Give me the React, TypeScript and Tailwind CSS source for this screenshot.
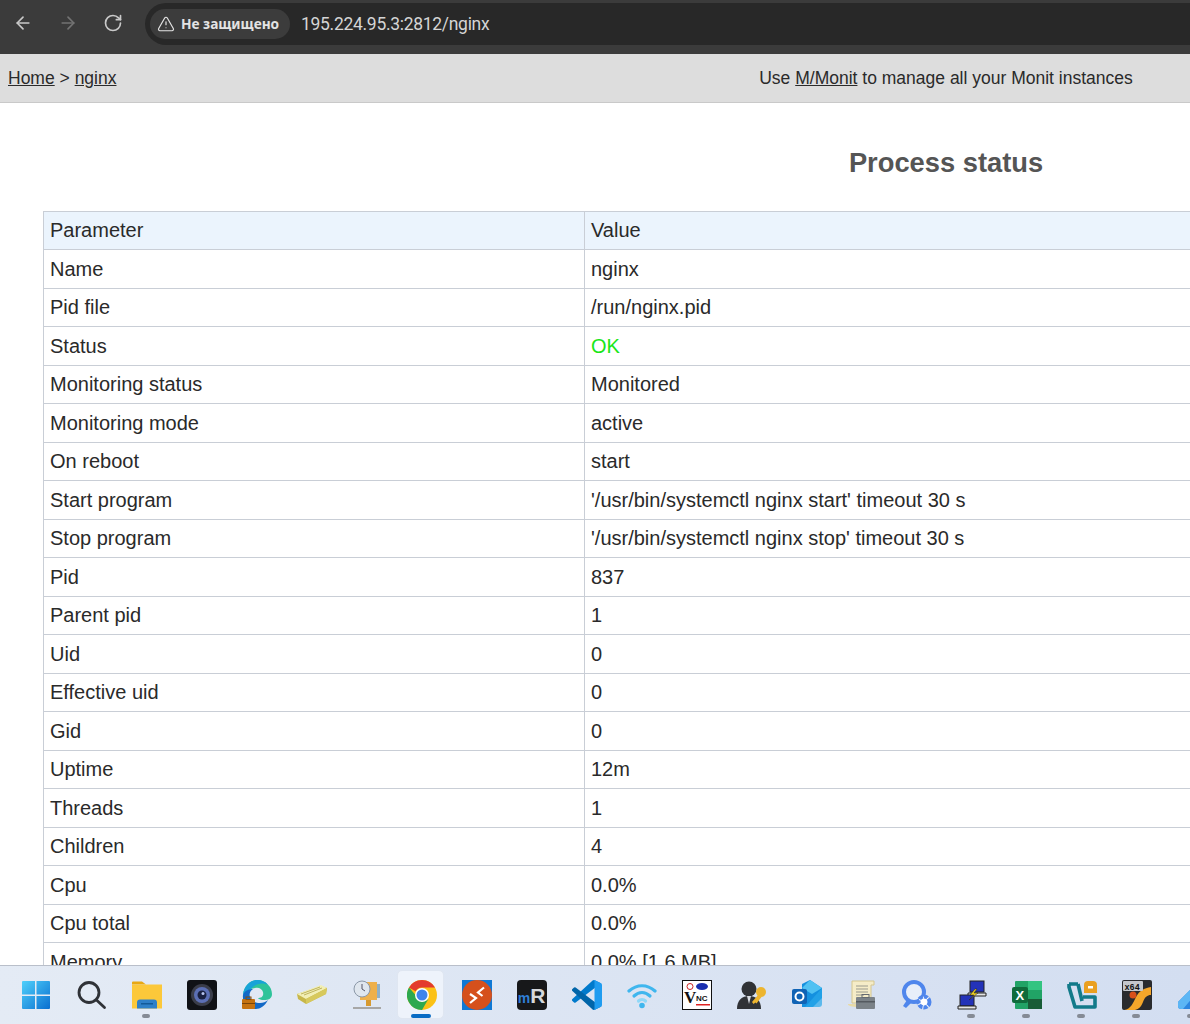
import React from "react";
import { ArrowLeft, ArrowRight, RotateCw, TriangleAlert } from "lucide-react";

const rows: [string, string][] = [
  ["Name", "nginx"],
  ["Pid file", "/run/nginx.pid"],
  ["Status", "OK"],
  ["Monitoring status", "Monitored"],
  ["Monitoring mode", "active"],
  ["On reboot", "start"],
  ["Start program", "'/usr/bin/systemctl nginx start' timeout 30 s"],
  ["Stop program", "'/usr/bin/systemctl nginx stop' timeout 30 s"],
  ["Pid", "837"],
  ["Parent pid", "1"],
  ["Uid", "0"],
  ["Effective uid", "0"],
  ["Gid", "0"],
  ["Uptime", "12m"],
  ["Threads", "1"],
  ["Children", "4"],
  ["Cpu", "0.0%"],
  ["Cpu total", "0.0%"],
  ["Memory", "0.0% [1.6 MB]"],
];

const Win = () => (
  <svg viewBox="1 0 30 30" className="w-[30px] h-[30px]">
    <defs>
      <linearGradient id="wg" x1="0" y1="0" x2="1" y2="1">
        <stop offset="0" stopColor="#4fd0fb" />
        <stop offset="1" stopColor="#0a6fd0" />
      </linearGradient>
    </defs>
    <path d="M1 2a1 1 0 0 1 1-1h12v13.500H1zM15.500 1H28a1 1 0 0 1 1 1v12.500H15.500zM1 16h13v13H2a1 1 0 0 1-1-1zM15.500 16H29v12a1 1 0 0 1-1 1H15.500z" fill="url(#wg)" />
  </svg>
);
const Search = () => (
  <svg viewBox="1 0 30 30" className="w-[30px] h-[30px]" fill="none" stroke="#2f3237" strokeWidth="2.800" strokeLinecap="round">
    <circle cx="13" cy="12.500" r="10" />
    <path d="M20.500 20l8 7.500" />
  </svg>
);
const Folder = () => (
  <svg viewBox="0 0 30 30" className="w-[30px] h-[30px]">
    <path d="M0 2.500a1 1 0 0 1 1-1h9l4 3h-14z" fill="#e8a813" />
    <path d="M0 4.500h30v24h-30z" fill="#fcc83a" />
    <path d="M5 28.500v-6a3 3 0 0 1 3-3h14a3 3 0 0 1 3 3v6z" fill="#2f80c8" />
    <path d="M9 23h12v1.500h-12z" fill="#135a99" />
  </svg>
);
const Camera = () => (
  <svg viewBox="0 0 30 30" className="w-[30px] h-[30px]">
    <rect width="30" height="30" rx="3" fill="#101216" />
    <circle cx="15" cy="15" r="11" fill="#3a3d4a" />
    <circle cx="15" cy="15" r="8" fill="#5b6fb5" />
    <circle cx="15" cy="15" r="4.500" fill="#1a2140" />
    <circle cx="16" cy="13.500" r="1.500" fill="#b6c4ee" />
  </svg>
);
const Edge = () => (
  <svg viewBox="0 0 30 30" className="w-[30px] h-[30px]">
    <path d="M1 15C2 5 9 0 15 0c9 0 15 7 15 14 0 5-4 6-8 6-5 0-6-2-6-2 3 0 6-1 5-6-1-3-4-5-8-4-6 1-11 3-12 7z" fill="#2ec39a" />
    <path d="M1 15C2 5 9 0 15 0c5 0 9 2 11 5-3-2-8-2-12 0-4 2-6 4-6 7z" fill="#18a3d8" />
    <path d="M1 15c1-4 6-6 10-6-3 2-4 5-3 8 1 4 5 6 10 6 3 0 6-1 8-3-3 6-8 9-12 9C5 29 0 22 1 15z" fill="#1269c7" />
    <rect x="0" y="19" width="13" height="10" rx="1" fill="#c5720f" />
    <rect x="4" y="17" width="5" height="2.500" fill="none" stroke="#8a4e08" />
    <rect x="0" y="23" width="13" height="1" fill="#7a4406" />
  </svg>
);
const Book = () => (
  <svg viewBox="0 0 30 30" className="w-[30px] h-[30px]">
    <path d="M0 14 24 6l6 2-1 6L9 24l-8-5z" fill="#c7b74a" />
    <path d="M0 14l9 5 21-11-6-3z" fill="#f2efb5" />
    <path d="M9 19l21-11-1 6L9 24z" fill="#d7c95c" />
    <path d="M4 14l19-7M7 15l18-7" stroke="#a89a38" strokeWidth="0.700" />
  </svg>
);
const ClockTree = () => (
  <svg viewBox="0 0 30 30" className="w-[30px] h-[30px]">
    <path d="M8 2h17v18H8z" fill="#eeb04a" />
    <path d="M25 4h3v14h-3z" fill="#8fb0c8" />
    <path d="M14 20h5v6h-5z" fill="#d79a30" />
    <path d="M1 27h28v2H1z" fill="#a7a7a7" />
    <circle cx="10" cy="9" r="8" fill="#dfe6ee" stroke="#8b98a8" />
    <path d="M10 4v5l3 2" stroke="#556" fill="none" />
  </svg>
);
const Chrome = () => (
  <svg viewBox="0 0 30 30" className="w-[30px] h-[30px]">
    <circle cx="15" cy="15" r="15" fill="#fbc116" />
    <path d="M15 0a15 15 0 0 1 13 7.500H15A7.500 7.500 0 0 0 8.500 11.300L2 7.500A15 15 0 0 1 15 0z" fill="#e33b2e" />
    <path d="M2 7.500A15 15 0 0 0 15 30l6.500-11.300a7.500 7.500 0 0 1-13-3.700z" fill="#2da94f" />
    <circle cx="15" cy="15" r="7" fill="#fff" />
    <circle cx="15" cy="15" r="5.500" fill="#3f84ed" />
  </svg>
);
const Remote = () => (
  <svg viewBox="0 0 30 30" className="w-[30px] h-[30px]">
    <rect width="30" height="30" fill="#0f78d4" />
    <circle cx="15" cy="15" r="15" fill="#d5501c" />
    <path d="M22 7.500l-6 5 4.500 3.500M8 14l6 4-6 5" fill="none" stroke="#fff" strokeWidth="2.200" />
  </svg>
);
const MR = () => (
  <div className="w-[30px] h-[30px] rounded-[4px] bg-[#17181a] flex items-end justify-center pb-[5px] font-['Liberation_Sans',sans-serif] font-bold leading-none">
    <span className="text-[14px] text-[#2f7fd8] leading-[13px]">m</span>
    <span className="text-[21px] text-[#d5d8dc] leading-[18px]">R</span>
  </div>
);
const VSCode = () => (
  <svg viewBox="0 0 100 100" className="w-[30px] h-[30px]">
    <path d="M96.461 10.796 75.857.876a6.230 6.230 0 0 0-7.107 1.207L1.299 63.580a4.167 4.167 0 0 0 .004 6.162l5.509 5.008a4.167 4.167 0 0 0 5.320.236l81.228-61.620c2.725-2.067 6.639-.124 6.639 3.297v-.240a6.250 6.250 0 0 0-3.539-5.630z" fill="#007acc" />
    <path d="m96.461 89.204-20.604 9.920a6.229 6.229 0 0 1-7.107-1.207L1.299 36.420a4.167 4.167 0 0 1 .004-6.162l5.509-5.008a4.167 4.167 0 0 1 5.320-.236l81.228 61.620c2.725 2.067 6.639.124 6.639-3.297v.240a6.250 6.250 0 0 1-3.539 5.630z" fill="#0065a9" />
    <path d="M75.858 99.126a6.232 6.232 0 0 1-7.108-1.210c2.306 2.307 6.250.674 6.250-2.588V4.672c0-3.262-3.944-4.895-6.250-2.589a6.232 6.232 0 0 1 7.108-1.210l20.600 9.908A6.250 6.250 0 0 1 100 16.413v67.174a6.250 6.250 0 0 1-3.541 5.633z" fill="#1f9cf0" />
  </svg>
);
const Wifi = () => (
  <svg viewBox="0 0 30 30" className="w-[30px] h-[30px]" fill="none" stroke="#3fb6ee" strokeWidth="3.200" strokeLinecap="round">
    <path d="M2 11c8-7 18-7 26 0" />
    <path d="M7 16c5-4.500 11-4.500 16 0" />
    <path d="M11.500 21c2-2 5-2 7 0" stroke="#8fd8f8" />
    <circle cx="15" cy="25.500" r="1.200" fill="#3fb6ee" stroke="#3fb6ee" />
  </svg>
);
const VNC = () => (
  <svg viewBox="0 0 30 30" className="w-[30px] h-[30px]">
    <rect x="0.500" y="0.500" width="29" height="29" fill="#fff" stroke="#111" />
    <ellipse cx="20" cy="6.500" rx="6" ry="3.500" fill="#1a2fb0" />
    <circle cx="8" cy="6.500" r="3" fill="none" stroke="#c22" />
    <text x="2" y="23" fontFamily="Liberation Serif, serif" fontWeight="bold" fontSize="17" fill="#111">V</text>
    <text x="14" y="21" fontFamily="Liberation Sans, sans-serif" fontWeight="bold" fontSize="8" fill="#111">NC</text>
    <rect x="14" y="24" width="14" height="1.500" fill="#d22" />
  </svg>
);
const PersonKey = () => (
  <svg viewBox="0 0 30 30" className="w-[30px] h-[30px]">
    <circle cx="12" cy="9" r="7.500" fill="#303236" />
    <path d="M0 29c0-9 5-13 12-13s12 4 12 13z" fill="#303236" />
    <path d="M10 16h4l-2 8z" fill="#d8dce2" />
    <circle cx="24" cy="12" r="5" fill="#edb52f" />
    <path d="M21 15l-6 7 1.500 2 2-1.500 1 1 5-6.500z" fill="#edb52f" />
  </svg>
);
const Outlook = () => (
  <svg viewBox="0 0 30 30" className="w-[30px] h-[30px]">
    <path d="M10 4l8-4 12 8v10l-9 9H10z" fill="#1490df" />
    <path d="M18 0l12 8-10 6-10-6z" fill="#50c1f2" />
    <path d="M30 8v16a3 3 0 0 1-3 3H13z" fill="#28a8ea" opacity="0.700" />
    <rect x="0" y="9" width="15" height="15" rx="2" fill="#0f63b5" />
    <circle cx="7.500" cy="16.500" r="4" fill="none" stroke="#fff" strokeWidth="2" />
  </svg>
);
const Scroll = () => (
  <svg viewBox="0 0 30 30" className="w-[30px] h-[30px]">
    <path d="M5 1h22v4h-3v18H5z" fill="#f5ecc8" stroke="#d5c68e" />
    <path d="M9 6h12M9 9h12M9 12h12M9 15h8" stroke="#9a9a8e" />
    <path d="M1 25c3 2 8 2 12 2v-3H1z" fill="#e8dba8" />
    <rect x="9" y="17" width="19" height="12" rx="1" fill="#7b8288" />
    <rect x="15" y="14.500" width="7" height="3" fill="none" stroke="#656a70" />
    <rect x="9" y="21" width="19" height="1.500" fill="#555a60" />
  </svg>
);
const GearSearch = () => (
  <svg viewBox="0 0 30 30" className="w-[30px] h-[30px]">
    <circle cx="12" cy="12" r="10" fill="#e7eef9" stroke="#4f86ec" strokeWidth="4" />
    <path d="M5 20l-4 6 3 2 5-5z" fill="#4f86ec" />
    <circle cx="22" cy="22" r="5.500" fill="#fff" stroke="#4f86ec" strokeWidth="4" strokeDasharray="4 1" />
  </svg>
);
const Network = () => (
  <svg viewBox="0 0 30 30" className="w-[30px] h-[30px]">
    <rect x="13" y="1" width="14" height="11" fill="#2332b8" stroke="#222" />
    <path d="M11 13h18v3H11z" fill="#e4e4e4" stroke="#222" />
    <rect x="3" y="15" width="14" height="11" fill="#2332b8" stroke="#222" />
    <path d="M1 26h18v3H1z" fill="#e4e4e4" stroke="#222" />
    <path d="M18 9l-5 6h4l-5 5 9-7h-4l3-4z" fill="#f0d020" stroke="#222" strokeWidth="0.500" />
  </svg>
);
const Excel = () => (
  <svg viewBox="0 0 30 30" className="w-[30px] h-[30px]">
    <rect x="3" y="1" width="27" height="28" rx="1" fill="#21a366" />
    <rect x="16" y="1" width="14" height="9" fill="#33c481" />
    <rect x="3" y="10" width="13" height="10" fill="#107c41" />
    <rect x="16" y="19" width="14" height="10" fill="#185c37" />
    <rect x="0" y="7" width="16" height="16" rx="2" fill="#0f6b3b" />
    <text x="3.500" y="20" fontFamily="Liberation Sans, sans-serif" fontWeight="bold" fontSize="13" fill="#fff">X</text>
  </svg>
);
const Veeam = () => (
  <svg viewBox="0 0 30 30" className="w-[30px] h-[30px]" fill="none">
    <path d="M11 4l4 17M2 4h9M2 4v3l6 20h20V17H16" stroke="#127a8a" strokeWidth="3.600" strokeLinejoin="round" />
    <path d="M17 5a4 4 0 0 1 4-4h5a4 4 0 0 1 4 4v8H17z" fill="#eaa021" />
    <rect x="21" y="6" width="5" height="2.500" fill="#fff" />
  </svg>
);
const X64 = () => (
  <svg viewBox="0 0 30 30" className="w-[30px] h-[30px]">
    <rect width="30" height="30" rx="2" fill="#2a2b2e" />
    <path d="M2 30c7-1 9-7 12-13s8-9 15-10v8c-4 0-6 2-8 7s-4 7-8 8z" fill="#f4a62a" />
    <rect x="1" y="1" width="20" height="10" rx="1" fill="#c4c7cc" />
    <text x="2.500" y="9.500" fontFamily="Liberation Mono, monospace" fontWeight="bold" fontSize="8.500" fill="#111">x64</text>
    <circle cx="11" cy="15" r="3.500" fill="#d8501a" />
  </svg>
);
const Last = () => (
  <svg viewBox="0 0 30 30" className="w-[30px] h-[30px]">
    <path d="M1 22 22 1h7v17L16 29H4a3 3 0 0 1-3-3z" fill="#2d86e0" />
    <path d="M1 22 22 1v9L6 29H4a3 3 0 0 1-3-3z" fill="#5cb6f5" />
  </svg>
);

const taskbar: { icon: React.ReactNode; dot?: boolean; active?: boolean }[] = [
  { icon: <Win /> },
  { icon: <Search /> },
  { icon: <Folder />, dot: true },
  { icon: <Camera /> },
  { icon: <Edge /> },
  { icon: <Book /> },
  { icon: <ClockTree /> },
  { icon: <Chrome />, active: true },
  { icon: <Remote /> },
  { icon: <MR /> },
  { icon: <VSCode /> },
  { icon: <Wifi /> },
  { icon: <VNC /> },
  { icon: <PersonKey /> },
  { icon: <Outlook /> },
  { icon: <Scroll /> },
  { icon: <GearSearch /> },
  { icon: <Network />, dot: true },
  { icon: <Excel />, dot: true },
  { icon: <Veeam />, dot: true },
  { icon: <X64 />, dot: true },
  { icon: <Last />, dot: true },
];

const cell = "border border-[#c9ced6] px-[6px] pt-0 pb-[0.500px]";

export default function App() {
  return (
    <div className="h-[1024px] w-[1190px] overflow-hidden flex flex-col bg-white font-['Liberation_Sans',Arial,sans-serif]">
      <header className="h-[54px] shrink-0 bg-[#3b3b3b] flex items-start text-[#e3e3e3]">
        <div className="flex items-center h-[45px] pl-[13px] gap-[25px] shrink-0">
          <ArrowLeft className="w-[20px] h-[20px] text-[#c9c9c9]" strokeWidth={2} />
          <ArrowRight className="w-[20px] h-[20px] text-[#737373]" strokeWidth={2} />
          <RotateCw className="w-[20px] h-[20px] text-[#c9c9c9]" strokeWidth={2} />
        </div>
        <div className="ml-[22px] mt-[3px] h-[42px] flex-1 bg-[#282828] rounded-l-[21px] flex items-center pl-[5px]">
          <div className="h-[30px] w-[140px] rounded-[15px] bg-[#3c3c3c] flex items-center pl-[7px] gap-[6px]">
            <TriangleAlert className="w-[18px] h-[18px] text-[#e3e3e3]" strokeWidth={1.6} />
            <span className="font-['Noto_Sans',sans-serif] font-bold text-[13.700px] text-[#e3e3e3] whitespace-nowrap">Не защищено</span>
          </div>
          <span className="ml-[11px] font-['Roboto',sans-serif] text-[17.500px] tracking-[-0.300px] text-[#d5d5d5] whitespace-nowrap">195.224.95.3:2812/nginx</span>
        </div>
      </header>

      <main className="flex-1 min-h-0 overflow-hidden text-[20px] text-[#2a2a2a]">
        <div className="w-[1892px]">
          <nav className="h-[49px] bg-[#dddddd] border-b border-[#c9c9c9] grid grid-cols-3 items-center text-[17.500px]">
            <div className="pl-2 whitespace-nowrap">
              <a className="underline">Home</a> &gt; <a className="underline">nginx</a>
            </div>
            <div className="text-center whitespace-nowrap">
              Use <a className="underline">M/Monit</a> to manage all your Monit instances
            </div>
          </nav>
          <h1 className="h-[107.500px] flex items-center justify-center pt-[13px] text-[27.300px] font-bold text-[#555]">Process status</h1>
          <table className="ml-[43px] w-[1806px] border-collapse table-fixed">
            <colgroup>
              <col className="w-[541px]" />
              <col />
            </colgroup>
            <thead>
              <tr className="h-[38.500px] bg-[#ebf4fd]">
                <th className={`${cell} font-normal text-left`}>Parameter</th>
                <th className={`${cell} font-normal text-left`}>Value</th>
              </tr>
            </thead>
            <tbody>
              {rows.map(([k, v]) => (
                <tr key={k} className="h-[38.500px]">
                  <td className={cell}>{k}</td>
                  <td className={v === "OK" ? `${cell} text-[#19e619]` : cell}>{v}</td>
                </tr>
              ))}
            </tbody>
          </table>
        </div>
      </main>

      <footer className="h-[59px] shrink-0 border-t border-[#b9bfca] bg-gradient-to-r from-[#e4ebf5] to-[#d3def1] flex pl-[9px] overflow-hidden">
        {taskbar.map((t, i) => (
          <div key={i} className="relative w-[55px] shrink-0 flex items-center justify-center">
            {t.active && <div className="absolute left-[3px] top-[4px] w-[47px] h-[49px] rounded-[5px] bg-[#eef3fb] border border-[#dfe6f1]" />}
            <div className="relative">{t.icon}</div>
            {t.dot && <div className="absolute bottom-[6px] left-[23px] w-[8px] h-[4px] rounded-full bg-[#858b95]" />}
            {t.active && <div className="absolute bottom-[6px] left-[17px] w-[20px] h-[4px] rounded-full bg-[#0a6cc4]" />}
          </div>
        ))}
      </footer>
    </div>
  );
}
